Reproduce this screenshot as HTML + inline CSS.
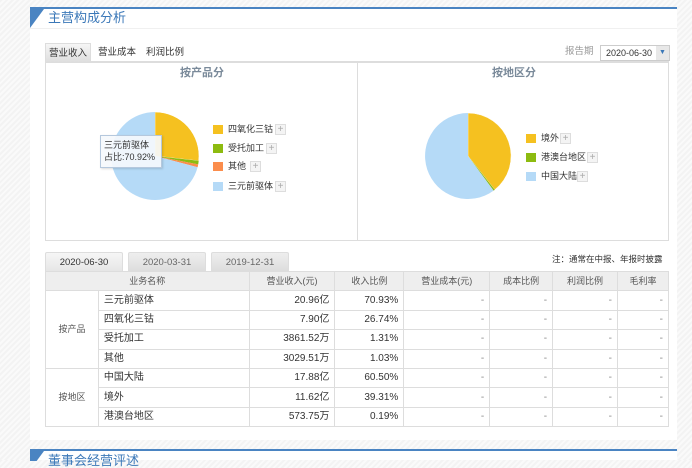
<!DOCTYPE html>
<html><head><meta charset="utf-8"><style>
*{margin:0;padding:0;box-sizing:border-box}
body{width:692px;height:460px;overflow:hidden;background:repeating-linear-gradient(135deg,#f3f3f3 0 2px,#fafafa 2px 4px);font-family:"Liberation Sans","Noto Sans CJK SC",sans-serif;font-size:10px;line-height:1.2;color:#333;position:relative}
.abs{position:absolute;white-space:nowrap}
.panel{left:30px;top:7px;width:647px;height:433px;background:#fff;border-top:2px solid #4a84c2}
.title{left:48px;top:10px;font-size:13px;color:#3b78b8}
.hdr{left:30px;top:9px;width:647px;height:20px;border-bottom:1px solid #f0f0f0}
.tab{top:43px;height:19px;line-height:19px;font-size:9.5px;color:#333}
.box{left:45px;top:62px;width:624px;height:179px;border:1px solid #ddd}
.ct{font-size:11px;color:#7a8a9a;font-weight:bold}
.sq{width:10px;height:9px}
.lg{font-size:9px;color:#333;line-height:11px}
.pl{width:11px;height:11px;border:1px solid #ddd;background:#f4f4f4;color:#aaa;font-size:10px;line-height:9px;text-align:center}
table{border-collapse:collapse;position:absolute;left:45px;top:271px;width:624px;font-size:10px;line-height:1}
td,th{border:1px solid #ddd;height:19.4px;padding:0 5px;white-space:nowrap}
th{background:#eee;font-weight:normal;color:#555;font-size:9px}
td.r{text-align:right}
td.d{text-align:right;color:#888}
.dt{top:252px;height:19px;line-height:19px;text-align:center;background:linear-gradient(#eee,#ddd);color:#666;font-size:9.5px;border:1px solid #ddd;border-bottom:none;border-radius:2px 2px 0 0}
</style></head><body>
<div class="abs panel"></div>
<div class="abs hdr"></div>
<svg class="abs" style="left:30px;top:9px" width="14" height="20"><polygon points="0,0 14,0 0,19" fill="#4a84c2"/></svg>
<div class="abs title">主营构成分析</div>
<div class="abs" style="left:45px;top:61px;width:624px;height:1px;background:#ddd"></div>
<div class="abs tab" style="left:45px;width:46px;background:linear-gradient(#f6f6f6,#dedede);border:1px solid #ddd;border-bottom:none;text-align:center">营业收入</div>
<div class="abs tab" style="left:98px">营业成本</div>
<div class="abs tab" style="left:146px">利润比例</div>
<div class="abs" style="left:565px;top:46px;color:#999;font-size:9.5px;line-height:12px">报告期</div>
<div class="abs" style="left:600px;top:45px;width:70px;height:16px;border:1px solid #ccc;background:#fff;font-size:9px;line-height:14px;padding-left:5px">2020-06-30<div class="abs" style="right:0;top:0;width:13px;height:14px;background:#e8e8e8;color:#3b78b8;font-size:7px;text-align:center">▼</div></div>
<div class="abs box"></div>
<div class="abs" style="left:357px;top:62px;width:1px;height:179px;background:#ddd"></div>
<div class="abs ct" style="left:180px;top:67px">按产品分</div>
<div class="abs ct" style="left:492px;top:67px">按地区分</div>
<svg class="abs" style="left:0;top:0" width="692" height="460">
<path d="M155,156 L155,112 A44,44 0 0 1 198.7,160.8Z" fill="#f5c120" stroke="#fff" stroke-width=".5"/>
<path d="M155,156 L198.7,160.8 A44,44 0 0 1 198.2,164.4Z" fill="#8dbb10"/>
<path d="M155,156 L198.2,164.4 A44,44 0 0 1 197.6,167.2Z" fill="#fb8d4c"/>
<path d="M155,156 L197.6,167.2 A44,44 0 1 1 155,112Z" fill="#b5daf7"/>
<path d="M468,156 L468,113 A43,43 0 0 1 494.8,189.7Z" fill="#f5c120" stroke="#fff" stroke-width=".5"/>
<path d="M468,156 L494.8,189.7 A43,43 0 0 1 493.6,190.6Z" fill="#8dbb10"/>
<path d="M468,156 L493.6,190.6 A43,43 0 1 1 468,113Z" fill="#b5daf7"/>
</svg>
<div class="abs" style="left:100px;top:135px;width:62px;height:33px;background:rgba(245,248,252,.92);border:1px solid #b5c8dd;padding:3px 3px;font-size:9px;line-height:12px;color:#333;box-shadow:1px 1px 2px rgba(0,0,0,.15)">三元前驱体<br>占比:70.92%</div>
<div class="abs sq" style="left:213px;top:125px;background:#f5c120"></div><div class="abs lg" style="left:228px;top:124px">四氧化三钴</div><div class="abs pl" style="left:275px;top:124px">+</div>
<div class="abs sq" style="left:213px;top:144px;background:#8dbb10"></div><div class="abs lg" style="left:228px;top:143px">受托加工</div><div class="abs pl" style="left:266px;top:143px">+</div>
<div class="abs sq" style="left:213px;top:162px;background:#fb8d4c"></div><div class="abs lg" style="left:228px;top:161px">其他</div><div class="abs pl" style="left:250px;top:161px">+</div>
<div class="abs sq" style="left:213px;top:182px;background:#b5daf7"></div><div class="abs lg" style="left:228px;top:181px">三元前驱体</div><div class="abs pl" style="left:275px;top:181px">+</div>
<div class="abs sq" style="left:526px;top:134px;background:#f5c120"></div><div class="abs lg" style="left:541px;top:133px">境外</div><div class="abs pl" style="left:560px;top:133px">+</div>
<div class="abs sq" style="left:526px;top:153px;background:#8dbb10"></div><div class="abs lg" style="left:541px;top:152px">港澳台地区</div><div class="abs pl" style="left:587px;top:152px">+</div>
<div class="abs sq" style="left:526px;top:172px;background:#b5daf7"></div><div class="abs lg" style="left:541px;top:171px">中国大陆</div><div class="abs pl" style="left:577px;top:171px">+</div>
<div class="abs dt" style="left:45px;width:78px;background:linear-gradient(#f6f6f6,#e6e6e6);color:#333">2020-06-30</div>
<div class="abs dt" style="left:128px;width:78px">2020-03-31</div>
<div class="abs dt" style="left:211px;width:78px">2019-12-31</div>
<div class="abs" style="left:552px;top:254px;font-size:8.5px;color:#333">注：通常在中报、年报时披露</div>
<table>
<colgroup><col style="width:53px"><col style="width:151px"><col style="width:86px"><col style="width:69px"><col style="width:86px"><col style="width:63px"><col style="width:65px"><col style="width:51px"></colgroup>
<tr><th colspan="2">业务名称</th><th>营业收入(元)</th><th>收入比例</th><th>营业成本(元)</th><th>成本比例</th><th>利润比例</th><th>毛利率</th></tr>
<tr><td rowspan="4" style="text-align:center;font-size:9px;color:#555">按产品</td><td>三元前驱体</td><td class="r">20.96亿</td><td class="r">70.93%</td><td class="d">-</td><td class="d">-</td><td class="d">-</td><td class="d">-</td></tr>
<tr><td>四氧化三钴</td><td class="r">7.90亿</td><td class="r">26.74%</td><td class="d">-</td><td class="d">-</td><td class="d">-</td><td class="d">-</td></tr>
<tr><td>受托加工</td><td class="r">3861.52万</td><td class="r">1.31%</td><td class="d">-</td><td class="d">-</td><td class="d">-</td><td class="d">-</td></tr>
<tr><td>其他</td><td class="r">3029.51万</td><td class="r">1.03%</td><td class="d">-</td><td class="d">-</td><td class="d">-</td><td class="d">-</td></tr>
<tr><td rowspan="3" style="text-align:center;font-size:9px;color:#555">按地区</td><td>中国大陆</td><td class="r">17.88亿</td><td class="r">60.50%</td><td class="d">-</td><td class="d">-</td><td class="d">-</td><td class="d">-</td></tr>
<tr><td>境外</td><td class="r">11.62亿</td><td class="r">39.31%</td><td class="d">-</td><td class="d">-</td><td class="d">-</td><td class="d">-</td></tr>
<tr><td>港澳台地区</td><td class="r">573.75万</td><td class="r">0.19%</td><td class="d">-</td><td class="d">-</td><td class="d">-</td><td class="d">-</td></tr>
</table>
<div class="abs" style="left:30px;top:449px;width:647px;height:11px;background:#fff;border-top:2px solid #4a84c2"></div>
<svg class="abs" style="left:30px;top:451px" width="14" height="10"><polygon points="0,0 14,0 0,19" fill="#4a84c2"/></svg>
<div class="abs" style="left:48px;top:454px;font-size:13px;color:#3b78b8;line-height:13px">董事会经营评述</div>
</body></html>
